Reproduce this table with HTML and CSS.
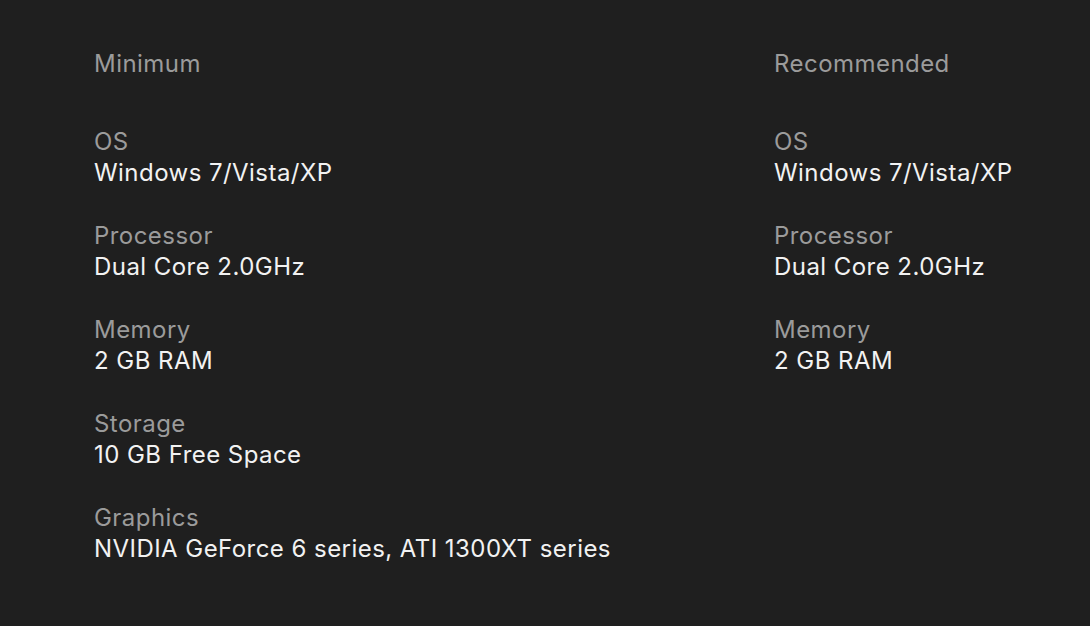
FILE: index.html
```html
<!DOCTYPE html>
<html>
<head>
<meta charset="utf-8">
<link rel="stylesheet" href="styles.css">
</head>
<body>
<main class="specs">
  <section class="col">
    <h2 class="heading">Minimum</h2>
    <dl class="list">
      <div class="item"><dt>OS</dt><dd>Windows 7/Vista/XP</dd></div>
      <div class="item"><dt>Processor</dt><dd>Dual Core 2.0GHz</dd></div>
      <div class="item"><dt>Memory</dt><dd>2 GB RAM</dd></div>
      <div class="item"><dt>Storage</dt><dd>10 GB Free Space</dd></div>
      <div class="item"><dt>Graphics</dt><dd>NVIDIA GeForce 6 series, ATI 1300XT series</dd></div>
    </dl>
  </section>
  <section class="col">
    <h2 class="heading">Recommended</h2>
    <dl class="list">
      <div class="item"><dt>OS</dt><dd>Windows 7/Vista/XP</dd></div>
      <div class="item"><dt>Processor</dt><dd>Dual Core 2.0GHz</dd></div>
      <div class="item"><dt>Memory</dt><dd>2 GB RAM</dd></div>
    </dl>
  </section>
</main>
</body>
</html>
```

FILE: styles.css
```css
html, body {
  margin: 0;
  padding: 0;
  background: #1f1f1f;
  height: 100%;
}
body {
  font-family: Inter, "Liberation Sans", sans-serif;
  font-size: 24px;
  line-height: 31px;
  letter-spacing: 0.45px;
  color: #f2f2f2;
}
.specs {
  display: grid;
  grid-template-columns: 680px 1fr;
  padding: 48px 0 0 94px;
}
.heading {
  margin: 0;
  font-size: 24px;
  font-weight: 400;
  color: #9b9b9b;
  line-height: 31px;
}
.list {
  margin: 47px 0 0;
  display: flex;
  flex-direction: column;
  gap: 32px;
}
.item dt {
  color: #9b9b9b;
}
.item dd {
  margin: 0;
  color: #f2f2f2;
}
```
